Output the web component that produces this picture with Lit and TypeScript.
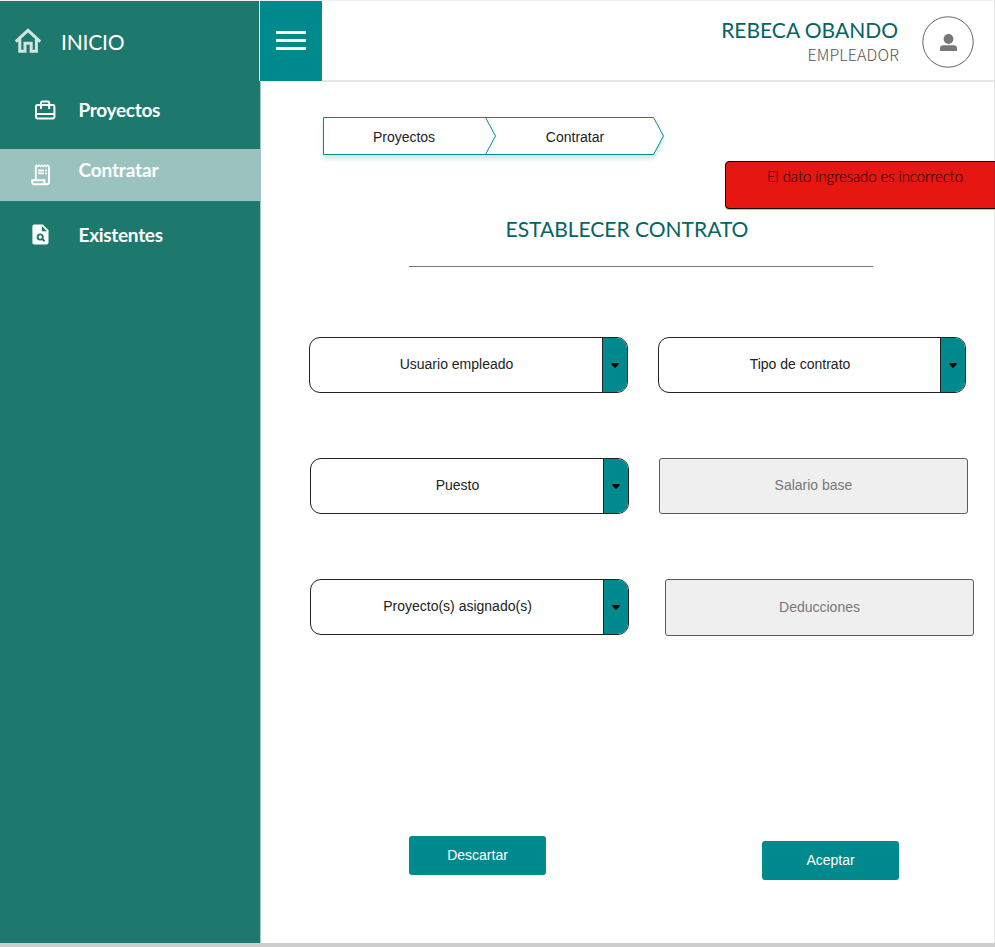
import { LitElement, html, css, svg } from "lit";
import { customElement, property } from "lit/decorators.js";

const icons = {
  home: svg`<svg width="28" height="26" viewBox="0 0 28 26" fill="none" stroke="#d3e4e2"><path d="M1.8 13.6 14 2.4 26.2 13.6" stroke-width="3"/><path d="M5.8 11V23.3H11V15.2H17.2V23.3H22.4V11" stroke-width="3"/></svg>`,
  briefcase: svg`<svg width="22" height="20" viewBox="0 0 22 20" fill="none" stroke="#fff" stroke-width="2"><rect x="2" y="5" width="18.4" height="13.4" rx="1.4"/><path d="M2 14H20M7 9V3Q7 1.6 8.4 1.6H13.8Q15.2 1.6 15.2 3V9"/></svg>`,
  receipt: svg`<svg width="20" height="22" viewBox="0 0 20 22" fill="none" stroke="#fff" stroke-width="1.9"><path d="M4.8 15.6V2.2M18 2.2V18.2Q18 20.2 15.6 20.2H3.6Q1.2 20.2 1.2 18.2V16.2H13.4V18.2Q13.4 20.2 15.6 20.2"/><path d="M4 2.6 5.4 1.2 6.8 2.6 8.2 1.2 9.6 2.6 11 1.2 12.4 2.6 13.8 1.2 15.2 2.6 16.6 1.2 18.4 2.6" stroke-width="1.4"/><path d="M7 6.5H13M7 9.4H13M14.2 6.5H16M14.2 9.4H16"/></svg>`,
  search: svg`<svg width="17" height="21" viewBox="0 0 17 21"><path fill="#fff" d="M2.2.5H10.8L16.5 6.2V18.6Q16.5 20.5 14.6 20.5H2.2Q.4 20.5.4 18.6V2.4Q.4.5 2.2.5Z"/><path fill="#1d796d" d="M9.8 2V7.2H15Z"/><circle cx="8.2" cy="13" r="2.6" fill="none" stroke="#1d796d" stroke-width="1.9"/><path d="M10 14.8 12.6 17.2" stroke="#1d796d" stroke-width="1.9"/></svg>`,
};

@customElement("select-field")
export class SelectField extends LitElement {
  @property() label = "";
  static styles = css`
    :host { display: block; }
    .box { display: flex; box-sizing: border-box; height: 56px; border: 1px solid #232323; border-radius: 11px; overflow: hidden; background: #fff; }
    .label { flex: 1; text-align: center; font: 14px/53px "Liberation Sans", Arial, sans-serif; color: #222; padding-left: 1px; }
    .toggle { width: 24px; border-left: 1px solid #232323; background: #018a8d; display: flex; align-items: center; justify-content: center; }
    svg { display: block; }
  `;
  render() {
    return html`<div class="box">
      <div class="label">${this.label}</div>
      <div class="toggle"><svg width="8" height="5" viewBox="0 0 8 5"><path d="M.8 0H7.2Q8.2.4 7.6 1.2L4.8 4.4Q4 5 3.2 4.4L.4 1.2Q-.2.4.8 0Z" /></svg></div>
    </div>`;
  }
}

@customElement("app-root")
export class AppRoot extends LitElement {
  static styles = css`
    :host { display: block; font-family: Lato, sans-serif; }
    .page { box-sizing: border-box; width: 995px; height: 947px; display: grid; grid-template-columns: 260px 1fr; border-top: 1px solid #efefef; border-bottom: 4px solid #cdcdcd; background: #fff; overflow: hidden; position: relative; }
    svg { display: block; }
    .side { background: #1d796d; color: #fff; border-top: 1px solid #8db5af; margin-top: -1px; box-shadow: 1px 0 #a4cac5; }
    .home { display: flex; height: 82px; align-items: center; padding: 0 0 2px 14px; gap: 19px; font-size: 21px; letter-spacing: -0.2px; box-sizing: border-box; }
    .item { display: flex; box-sizing: border-box; height: 52px; font-weight: 700; font-size: 19px; line-height: 24px; letter-spacing: -0.3px; }
    .icon { width: 78.5px; flex: none; box-sizing: border-box; }
    .projects { margin-top: 5px; height: 61px; padding-top: 10px; }
    .projects .icon { padding: 2px 0 0 34px; }
    .hire { background: #9ac3bf; padding-top: 9px; width: 261px; position: relative; letter-spacing: -0.15px; }
    .hire .icon { padding: 6px 0 0 31px; }
    .existing { padding-top: 22px; }
    .existing .icon { padding: 1px 0 0 32px; }
    .main { min-width: 0; box-sizing: border-box; border-right: 1px solid #e4e4e4; display: flex; flex-direction: column; }
    .top { display: flex; height: 81px; box-sizing: border-box; border-bottom: 2px solid #e6e6e6; flex: none; }
    .menu { width: 62px; height: 80px; box-sizing: border-box; background: #018a8d; flex: none; display: flex; flex-direction: column; gap: 5px; padding: 30px 0 0 16px; z-index: 1; box-shadow: -1px 0 #fff, 0 1px #fff, 0 -1px #fff; }
    .bar { width: 30px; height: 3px; background: #fff; }
    .who { flex: 1; text-align: right; padding-top: 15px; }
    .name { font-size: 21px; line-height: 28px; color: #056462; padding-right: 1px; }
    .role { font: 300 16px/21px "Noto Sans CJK SC", sans-serif; color: #555; letter-spacing: 0.1px; }
    .avatar { margin: 15px 20px 0 23px; flex: none; }
    .crumbs { position: relative; width: 342px; height: 38px; margin: 35px 0 0 63px; display: flex; font: 14px/41px "Liberation Sans", Arial, sans-serif; color: #222; text-align: center; flex: none; }
    .outline { position: absolute; inset: 0; overflow: visible; filter: drop-shadow(0 4px 2px rgba(1, 138, 141, 0.2)); }
    .crumb { width: 162px; position: relative; }
    .last { width: 180px; }
    .error { position: absolute; left: 725px; top: 160px; width: 290px; height: 48px; box-sizing: border-box; border: 1px solid #110000; border-radius: 4px; background: #e61610; box-shadow: 0 1px #a9d18e; padding-left: 41px; font-weight: 300; font-size: 15px; line-height: 28px; letter-spacing: -0.1px; color: #000; }
    .edge { position: absolute; right: 0; top: 161px; width: 1px; height: 46px; background: #c9191b; }
    .title { margin: 60px 0 1px 245.5px; font-weight: 400; font-size: 21px; line-height: 28px; color: #056462; }
    .rule { width: 464px; height: 1px; background: #7a7a7a; margin: 22px 0 0 149px; flex: none; }
    .row { display: flex; height: 57px; margin: 0 0 64px 50px; gap: 30px; flex: none; }
    .first { margin: 70px 0 64px 49px; }
    .wide { width: 319px; }
    .narrow { width: 308px; }
    .input { width: 309px; height: 56px; box-sizing: border-box; border: 1px solid #5b5b5b; border-radius: 3px; background: #efefef; color: #777; text-align: center; font: 14px/53px "Liberation Sans", Arial, sans-serif; }
    .third { gap: 36px; }
    .third .input { height: 57px; line-height: 55px; }
    .actions { display: flex; margin: 136px 0 0 149px; gap: 216px; }
    .button { border: 0; border-radius: 3px; width: 137px; height: 39px; padding: 0; background: #018a8d; color: #fff; font: 14px/39px "Liberation Sans", Arial, sans-serif; }
    .accept { margin-top: 5px; }
  `;

  render() {
    return html`<div class="page">
      <nav class="side">
        <div class="home">${icons.home}<span>INICIO</span></div>
        <div class="item projects"><span class="icon">${icons.briefcase}</span>Proyectos</div>
        <div class="item hire"><span class="icon">${icons.receipt}</span>Contratar</div>
        <div class="item existing"><span class="icon">${icons.search}</span>Existentes</div>
      </nav>
      <main class="main">
        <header class="top">
          <div class="menu"><span class="bar"></span><span class="bar"></span><span class="bar"></span></div>
          <div class="who"><div class="name">REBECA OBANDO</div><div class="role">EMPLEADOR</div></div>
          <svg class="avatar" width="52" height="52" viewBox="0 0 52 52"><circle cx="26" cy="26" r="25.2" fill="none" stroke="#666"/><circle cx="26.5" cy="23" r="4.9" fill="#777"/><path fill="#777" d="M18 35V32.6Q18 29.3 21.4 29.3H31.6Q35 29.3 35 32.6V35Z"/></svg>
        </header>
        <div class="crumbs">
          <svg class="outline" width="342" height="38" viewBox="0 0 342 38" stroke="#018a8d"><path fill="#fff" d="M.5.5H330.5L340.5 19 330.5 37.5H.5Z"/><path fill="none" d="M162.5.5 172.5 19 162.5 37.5"/></svg>
          <span class="crumb">Proyectos</span><span class="crumb last">Contratar</span>
        </div>
        <div class="title">ESTABLECER CONTRATO</div>
        <div class="rule"></div>
        <div class="row first"><select-field class="wide" label="Usuario empleado"></select-field><select-field class="narrow" label="Tipo de contrato"></select-field></div>
        <div class="row"><select-field class="wide" label="Puesto"></select-field><div class="input">Salario base</div></div>
        <div class="row third"><select-field class="wide" label="Proyecto(s) asignado(s)"></select-field><div class="input">Deducciones</div></div>
        <div class="actions"><button class="button">Descartar</button><button class="button accept">Aceptar</button></div>
      </main>
      <div class="error">El dato ingresado es incorrecto</div>
      <div class="edge"></div>
    </div>`;
  }
}
